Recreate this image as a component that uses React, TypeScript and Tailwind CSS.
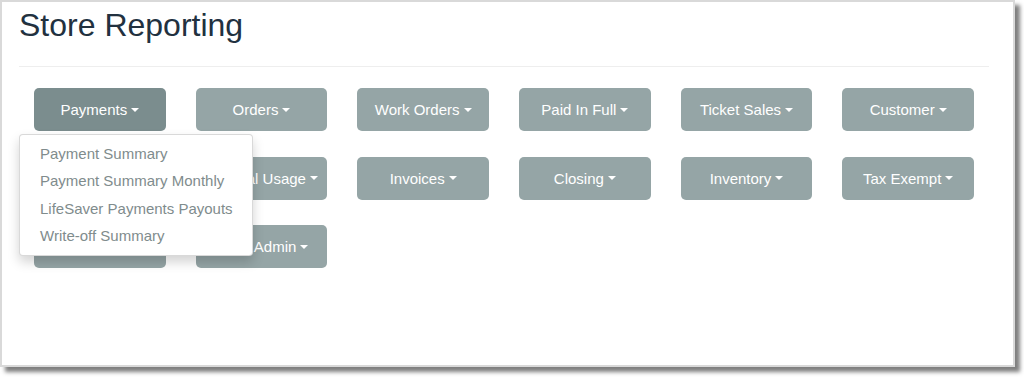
import React from 'react';

const rows: string[][] = [
  ['Payments', 'Orders', 'Work Orders', 'Paid In Full', 'Ticket Sales', 'Customer'],
  ['Employee', 'Material Usage', 'Invoices', 'Closing', 'Inventory', 'Tax Exempt'],
  ['Employee', 'Store Admin'],
];

const paymentItems = [
  'Payment Summary',
  'Payment Summary Monthly',
  'LifeSaver Payments Payouts',
  'Write-off Summary',
];

const Caret = () => (
  <span className="inline-block w-0 h-0 ml-[4px] align-middle border-t-[4px] border-t-white border-x-[4px] border-x-transparent" />
);

const ReportButton = ({ label, open }: { label: string; open?: boolean }) => (
  <button
    className={`w-full h-[43px] flex items-center justify-center rounded-[5px] text-white text-[15px] leading-[21px] ${
      open ? 'bg-[#7b8d8e]' : 'bg-[#95a5a6]'
    }`}
  >
    {label}
    <Caret />
  </button>
);

const DropdownMenu = () => (
  <ul className="absolute left-0 top-[47px] z-10 w-[234px] py-[5px] bg-white border border-black/15 rounded-[4px] shadow-[0_6px_12px_rgba(0,0,0,0.175)]">
    {paymentItems.map((item) => (
      <li key={item} className="px-[20px] py-[3px] text-[15px] leading-[21.4px] text-[#7f8c8d] whitespace-nowrap">
        {item}
      </li>
    ))}
  </ul>
);

export default function App() {
  return (
    <div className="w-[1024px] h-[377px] bg-white" style={{ fontFamily: '"Liberation Sans", Arial, sans-serif' }}>
      <div className="w-[1015px] h-[367px] bg-white border-2 border-[#d9d9d9] shadow-[5px_5px_4px_rgba(0,0,0,0.5)] pl-[17px] pr-[24px] pt-[6px]">
        <h1 className="text-[32px] leading-[35px] text-[#22313f]">Store Reporting</h1>
        <hr className="mt-[23px] border-t border-[#eeeeee]" />
        <div className="mt-[21px] flex flex-col gap-y-[25.5px]">
          {rows.map((row, r) => (
            <div key={r} className="grid grid-cols-6">
              {row.map((label, c) => (
                <div key={label + c} className={`px-[15px] ${r === 0 && c === 0 ? 'relative' : ''}`}>
                  <ReportButton label={label} open={r === 0 && c === 0} />
                  {r === 0 && c === 0 && (
                    <div className="absolute left-0 top-[-1px]">
                      <DropdownMenu />
                    </div>
                  )}
                </div>
              ))}
            </div>
          ))}
        </div>
      </div>
    </div>
  );
}
